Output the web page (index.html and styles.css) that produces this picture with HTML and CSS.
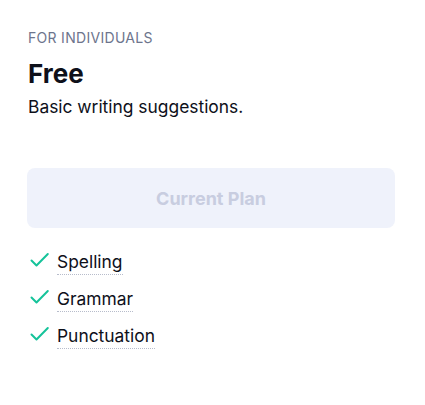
FILE: index.html
```html
<!DOCTYPE html>
<html>
<head>
<meta charset="utf-8">
<link rel="stylesheet" href="styles.css">
</head>
<body>
<div class="card">
  <div class="eyebrow">FOR INDIVIDUALS</div>
  <h2 class="title">Free</h2>
  <p class="desc">Basic writing suggestions.</p>
  <button class="plan-btn" disabled>Current Plan</button>
  <ul class="features">
    <li class="feature"><svg class="check" viewBox="0 0 20 16" width="20" height="16"><path d="M1.5 8.5 L6.5 13.5 L17.8 2" fill="none" stroke="#15c39a" stroke-width="2" stroke-linecap="round" stroke-linejoin="round"/></svg><span class="label">Spelling</span></li>
    <li class="feature"><svg class="check" viewBox="0 0 20 16" width="20" height="16"><path d="M1.5 8.5 L6.5 13.5 L17.8 2" fill="none" stroke="#15c39a" stroke-width="2" stroke-linecap="round" stroke-linejoin="round"/></svg><span class="label">Grammar</span></li>
    <li class="feature"><svg class="check" viewBox="0 0 20 16" width="20" height="16"><path d="M1.5 8.5 L6.5 13.5 L17.8 2" fill="none" stroke="#15c39a" stroke-width="2" stroke-linecap="round" stroke-linejoin="round"/></svg><span class="label">Punctuation</span></li>
  </ul>
</div>
</body>
</html>
```
FILE: styles.css
```css
html, body { margin: 0; padding: 0; background: #fff; }
body { font-family: Inter, "Noto Sans", sans-serif; color: #0e101a; }
.card { padding: 28px 30px 0 27px; display: flex; flex-direction: column; align-items: flex-start; }
.eyebrow { font-size: 14px; line-height: 20px; color: #6d758d; letter-spacing: 0.3px; margin-left: 1px; }
.title { margin: 10px 0 0 1px; font-size: 26px; line-height: 32px; font-weight: 700; color: #0e101a; }
.desc { margin: 5px 0 0 1px; font-size: 17.4px; line-height: 24px; color: #0e101a; }
.plan-btn { margin-top: 49px; height: 60px; width: 368px; border: none; border-radius: 8px; background: #eff2fb; color: #c8cde0; font-family: inherit; font-size: 18px; font-weight: 700; padding: 0; }
.features { list-style: none; margin: 22px 0 0 0; padding: 0; display: flex; flex-direction: column; gap: 12px; }
.feature { display: flex; align-items: flex-start; gap: 7px; font-size: 17.4px; }
.check { margin: 2px 0 0 3px; flex: none; display: block; }
.label { display: block; border-bottom: 1px dotted #b7bccb; line-height: 24px; }
```
